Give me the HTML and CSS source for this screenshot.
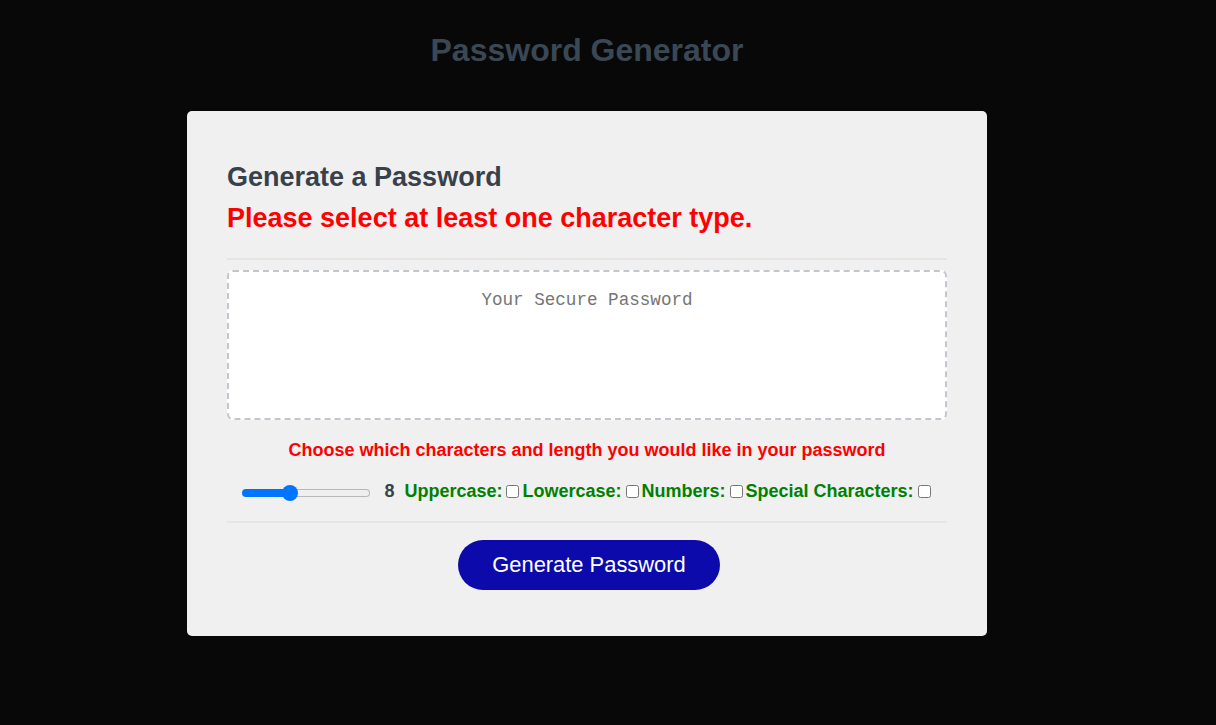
FILE: index.html
```html
<!DOCTYPE html>
<html lang="en">
<head>
<meta charset="utf-8">
<title>Password Generator</title>
<link rel="stylesheet" href="styles.css">
</head>
<body>
<div class="page">
  <h1 class="title">Password Generator</h1>
  <div class="card">
    <h2 class="card-title">Generate a Password</h2>
    <p class="error">Please select at least one character type.</p>
    <hr class="rule">
    <textarea class="output" readonly placeholder="Your Secure Password"></textarea>
    <p class="hint">Choose which characters and length you would like in your password</p>
    <div class="options"><input class="length" type="range" min="1" max="21" value="8" style="--fill: 36.7%"><span class="length-value">8</span><label class="opt">Uppercase:</label><input type="checkbox"><label class="opt">Lowercase:</label><input type="checkbox"><label class="opt">Numbers:</label><input type="checkbox"><label class="opt">Special Characters:</label><input type="checkbox"></div>
    <hr class="rule rule-bottom">
    <div class="actions"><button class="generate" type="button">Generate Password</button></div>
  </div>
</div>
</body>
</html>
```
FILE: styles.css
```css
html, body {
  margin: 0;
  padding: 0;
  background: #080808;
  font-family: "Liberation Sans", Arial, sans-serif;
}

.page {
  width: 1174px;
  display: flex;
  flex-direction: column;
  align-items: center;
}

.title {
  margin: 32px 0 0;
  font-size: 32px;
  line-height: 36px;
  font-weight: bold;
  color: #3a4754;
}

.card {
  box-sizing: border-box;
  width: 800px;
  margin-top: 43px;
  padding: 51px 40px 46px;
  background: #f0f0f0;
  border-radius: 5px;
  display: flex;
  flex-direction: column;
}

.card-title {
  margin: 0;
  font-size: 27px;
  line-height: 31px;
  font-weight: bold;
  color: #38414a;
}

.error {
  margin: 10px 0 0;
  font-size: 27px;
  line-height: 31px;
  font-weight: bold;
  color: #ff0000;
}

.rule {
  margin: 24px 0 0;
  height: 2px;
  border: 0;
  background: #e5e5e5;
}

.output {
  box-sizing: border-box;
  margin-top: 10px;
  width: 720px;
  height: 150px;
  padding: 18px 12px;
  border: 2px dashed #c2c7cd;
  border-radius: 6px;
  background: #ffffff;
  font-family: "Liberation Mono", "DejaVu Sans Mono", monospace;
  font-size: 17.6px;
  line-height: 20px;
  text-align: center;
  resize: none;
  outline: none;
}

.output::placeholder {
  color: #757575;
}

.hint {
  margin: 20px 0 0;
  font-size: 18px;
  line-height: 21px;
  font-weight: bold;
  color: #ff0000;
  text-align: center;
}

.options {
  margin-top: 20px;
  height: 21px;
  display: flex;
  align-items: center;
  justify-content: center;
  font-size: 18px;
  font-weight: bold;
}

.length {
  -webkit-appearance: none;
  appearance: none;
  box-sizing: border-box;
  margin: 2px 2px 0;
  width: 128px;
  height: 8px;
  border: 1px solid transparent;
  border-radius: 4px;
  background:
    linear-gradient(to right, #0075ff 0, #0075ff var(--fill), transparent var(--fill)) border-box,
    linear-gradient(#efefef, #efefef) padding-box,
    linear-gradient(#b8b8b8, #b8b8b8) border-box;
}

.length::-webkit-slider-thumb {
  -webkit-appearance: none;
  appearance: none;
  width: 16px;
  height: 16px;
  border-radius: 50%;
  background: #0075ff;
  border: 0;
}

.length-value {
  margin: 0 10px 0 12px;
  color: #38414a;
}

.opt {
  color: #008000;
}

.options input[type="checkbox"] {
  width: 13px;
  height: 13px;
  margin: 3px 3px 3px 4px;
}

.rule-bottom {
  margin-top: 19px;
}

.actions {
  margin-top: 17px;
  display: flex;
  justify-content: center;
  padding-left: 4px;
}

.generate {
  width: 262px;
  height: 50px;
  border: 0;
  border-radius: 25px;
  background: #0c0aab;
  color: #ffffff;
  font-family: "Liberation Sans", Arial, sans-serif;
  font-size: 21.9px;
  cursor: pointer;
}
```
